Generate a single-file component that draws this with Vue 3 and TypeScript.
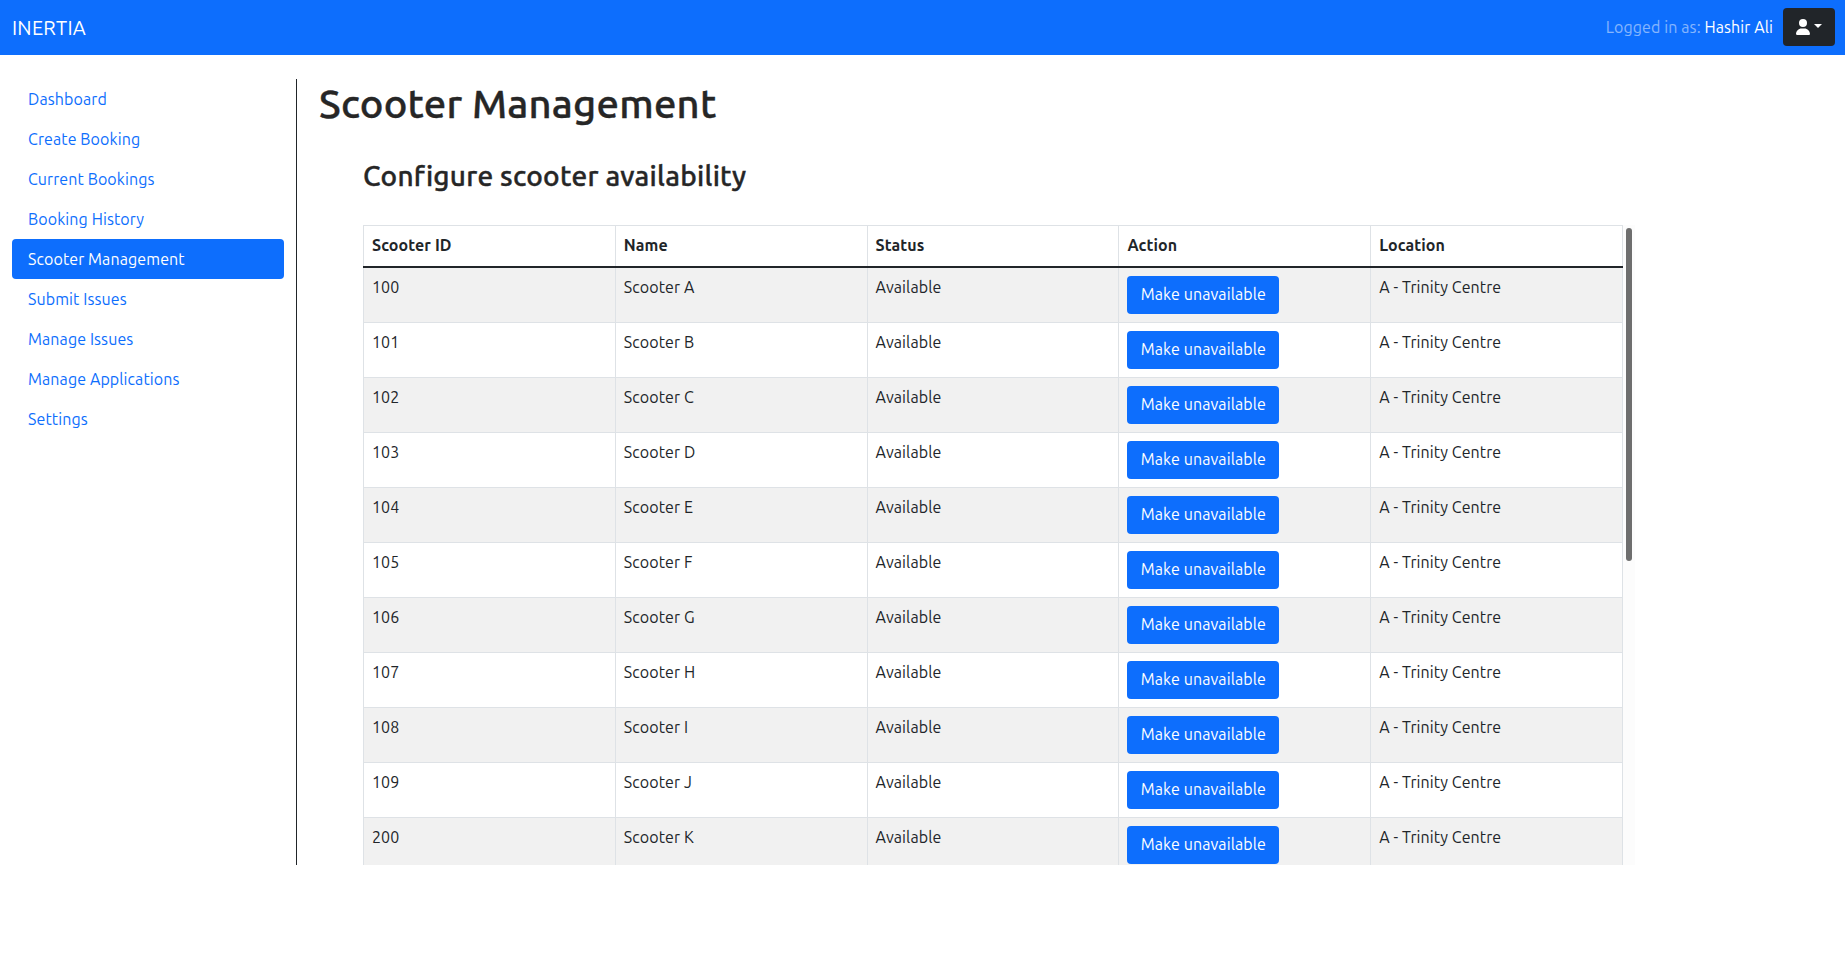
<script setup lang="ts">
import { ref } from 'vue'

interface Scooter {
  id: number
  name: string
  available: boolean
  location: string
}

const navItems: string[] = [
  'Dashboard',
  'Create Booking',
  'Current Bookings',
  'Booking History',
  'Scooter Management',
  'Submit Issues',
  'Manage Issues',
  'Manage Applications',
  'Settings',
]
const activeItem = ref('Scooter Management')

const columns: string[] = ['Scooter ID', 'Name', 'Status', 'Action', 'Location']

const ids: number[] = [100, 101, 102, 103, 104, 105, 106, 107, 108, 109, 200]
const scooters = ref<Scooter[]>(
  ids.map((id, i) => ({
    id,
    name: `Scooter ${String.fromCharCode(65 + i)}`,
    available: true,
    location: 'A - Trinity Centre',
  })),
)
</script>

<template>
  <div class="app">
    <header class="navbar">
      <a class="brand">INERTIA</a>
      <div class="account">
        <p class="signed-in">Logged in as: <a class="user">Hashir Ali</a></p>
        <button class="account-button" type="button" aria-label="Account">
          <svg class="user-icon" viewBox="0 0 448 512" fill="currentColor" aria-hidden="true">
            <path d="M224 256A128 128 0 1 0 224 0a128 128 0 1 0 0 256zm-45.700 48C79.800 304 0 383.800 0 482.300C0 498.700 13.300 512 29.700 512H418.300c16.400 0 29.700-13.300 29.700-29.700C448 383.800 368.200 304 269.700 304H178.300z" />
          </svg>
          <span class="caret"></span>
        </button>
      </div>
    </header>

    <div class="body">
      <nav class="sidebar">
        <a
          v-for="item in navItems"
          :key="item"
          class="nav-link"
          :class="{ active: item === activeItem }"
          @click="activeItem = item"
        >{{ item }}</a>
      </nav>

      <main class="content">
        <h1 class="title">Scooter Management</h1>
        <section class="section">
          <h3 class="subtitle">Configure scooter availability</h3>
          <div class="scroll-area">
            <table class="table">
              <thead>
                <tr>
                  <th v-for="column in columns" :key="column">{{ column }}</th>
                </tr>
              </thead>
              <tbody>
                <tr v-for="scooter in scooters" :key="scooter.id">
                  <td>{{ scooter.id }}</td>
                  <td>{{ scooter.name }}</td>
                  <td>{{ scooter.available ? 'Available' : 'Unavailable' }}</td>
                  <td>
                    <button class="btn" type="button" @click="scooter.available = !scooter.available">
                      {{ scooter.available ? 'Make unavailable' : 'Make available' }}
                    </button>
                  </td>
                  <td>{{ scooter.location }}</td>
                </tr>
              </tbody>
            </table>
            <div class="track"><div class="thumb"></div></div>
          </div>
        </section>
      </main>
    </div>
  </div>
</template>

<style>
body {
  margin: 0;
  background: #fff;
}
</style>

<style scoped>
.app,
.app * {
  box-sizing: border-box;
}
.app {
  font-family: Ubuntu, "Noto Sans", sans-serif;
  font-size: 16px;
  line-height: 1.5;
  letter-spacing: 0.1px;
  color: #212529;
}
.navbar {
  display: flex;
  align-items: center;
  justify-content: space-between;
  height: 55px;
  padding: 0 10px 1px 12px;
  background: #0d6efd;
}
.brand {
  padding-top: 2px;
  font-size: 20px;
  line-height: 30px;
  letter-spacing: 0.25px;
  color: #fff;
}
.account {
  display: flex;
  align-items: center;
  gap: 10px;
}
.signed-in {
  margin: 0;
  color: rgba(255, 255, 255, 0.5);
}
.user {
  color: #fff;
}
.account-button {
  display: flex;
  align-items: center;
  width: 52px;
  height: 38px;
  padding: 0 13px;
  border: 0;
  border-radius: 4px;
  background: #212529;
  color: #fff;
}
.user-icon {
  display: block;
  flex: none;
  width: 14px;
  height: 16px;
}
.caret {
  flex: none;
  margin: -3px 0 0 4px;
  border-top: 4.8px solid #fff;
  border-right: 4.8px solid transparent;
  border-left: 4.8px solid transparent;
}
.body {
  display: flex;
  margin-top: 24px;
  height: 786px;
}
.sidebar {
  flex: none;
  display: flex;
  flex-direction: column;
  width: 297px;
  padding: 0 12px;
  border-right: 1px solid #212529;
}
.nav-link {
  height: 40px;
  padding: 8px 16px;
  border-radius: 4px;
  color: #0d6efd;
  cursor: pointer;
}
.nav-link.active {
  background: #0d6efd;
  color: #fff;
}
.content {
  flex: 1;
  padding-left: 22px;
}
.title,
.subtitle {
  font-weight: 500;
  color: #262626;
  -webkit-text-stroke: 0.4px #262626;
}
.title {
  margin: 0;
  padding-top: 1px;
  font-size: 40px;
  line-height: 48px;
  letter-spacing: 0.2px;
}
.section {
  padding: 31px 0 0 44px;
}
.subtitle {
  margin: 0 0 32px;
  font-size: 28px;
  line-height: 34px;
  letter-spacing: 0.24px;
}
.scroll-area {
  display: flex;
  width: 1272px;
  height: 640px;
  overflow: hidden;
}
.table {
  flex: none;
  width: 1260px;
  height: max-content;
  table-layout: fixed;
  border-collapse: collapse;
}
.table th,
.table td {
  padding: 7px 8px 8px;
  border: 1px solid #dee2e6;
  text-align: left;
  vertical-align: top;
}
.table th {
  padding-bottom: 9px;
  font-weight: 700;
}
.table thead th {
  border-bottom: 2px solid #212529;
}
.table tbody tr:nth-child(odd) {
  background: #f1f1f1;
}
.btn {
  display: block;
  width: 152px;
  height: 38px;
  margin-top: 1px;
  padding: 5px 12px 7px;
  border: 0;
  border-radius: 4px;
  background: #0d6efd;
  color: #fff;
  font: inherit;
  letter-spacing: 0.1px;
  white-space: nowrap;
  cursor: pointer;
}
.track {
  flex: none;
  width: 12px;
  padding: 3px;
  background: #fcfcfc;
}
.thumb {
  width: 6px;
  height: 333px;
  border-radius: 3px;
  background: #6e6e6e;
}
</style>
